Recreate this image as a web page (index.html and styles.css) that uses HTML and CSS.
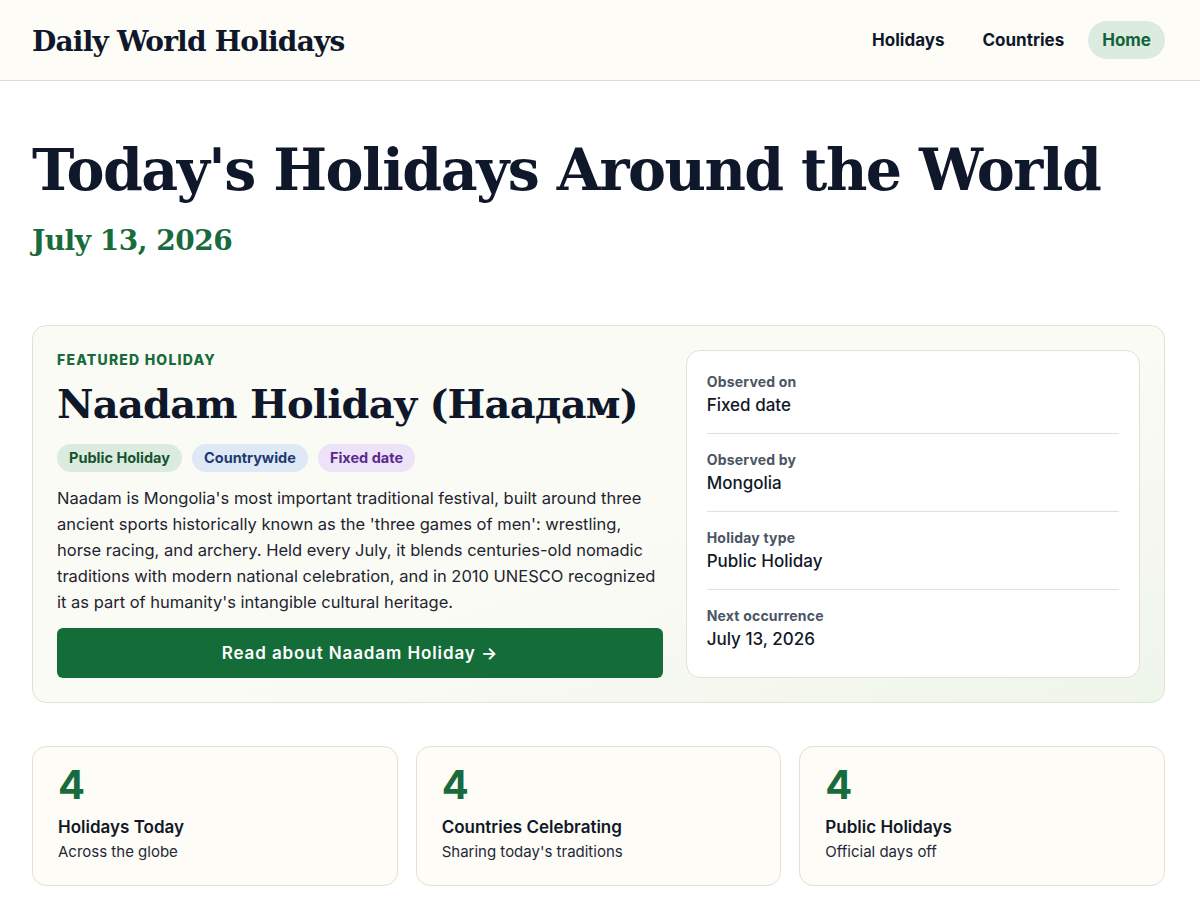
FILE: index.html
```html
<!DOCTYPE html>
<html lang="en">
<head>
    <meta charset="UTF-8">
    <title>Daily World Holidays</title>
    <meta name="viewport" content="width=device-width, initial-scale=1.0">
    <link rel="stylesheet" href="styles.css">
</head>
<body>
    <header class="site-header">
        <a class="logo" href="#">Daily World Holidays</a>
        <nav class="nav">
            <a href="#">Holidays</a>
            <a href="#">Countries</a>
            <a href="#" class="active">Home</a>
        </nav>
    </header>

    <main class="page">
        <section class="intro">
            <h1>Today's Holidays Around the World</h1>
            <p class="today">July 13, 2026</p>
        </section>

        <section class="featured">
            <div class="featured-main">
                <p class="eyebrow">Featured Holiday</p>
                <h2>Naadam Holiday (Наадам)</h2>
                <div class="tags">
                    <span class="tag tag-green">Public Holiday</span>
                    <span class="tag tag-blue">Countrywide</span>
                    <span class="tag tag-purple">Fixed date</span>
                </div>
                <p class="summary">Naadam is Mongolia's most important traditional festival, built around three ancient sports historically known as the 'three games of men': wrestling, horse racing, and archery. Held every July, it blends centuries-old nomadic traditions with modern national celebration, and in 2010 UNESCO recognized it as part of humanity's intangible cultural heritage.</p>
                <a class="read-btn" href="#">Read about Naadam Holiday &rarr;</a>
            </div>
            <dl class="facts">
                <div class="fact">
                    <dt>Observed on</dt>
                    <dd>Fixed date</dd>
                </div>
                <div class="fact">
                    <dt>Observed by</dt>
                    <dd>Mongolia</dd>
                </div>
                <div class="fact">
                    <dt>Holiday type</dt>
                    <dd>Public Holiday</dd>
                </div>
                <div class="fact">
                    <dt>Next occurrence</dt>
                    <dd>July 13, 2026</dd>
                </div>
            </dl>
        </section>

        <section class="stats">
            <div class="stat">
                <div class="stat-num">4</div>
                <div class="stat-title">Holidays Today</div>
                <div class="stat-sub">Across the globe</div>
            </div>
            <div class="stat">
                <div class="stat-num">4</div>
                <div class="stat-title">Countries Celebrating</div>
                <div class="stat-sub">Sharing today's traditions</div>
            </div>
            <div class="stat">
                <div class="stat-num">4</div>
                <div class="stat-title">Public Holidays</div>
                <div class="stat-sub">Official days off</div>
            </div>
        </section>
    </main>
</body>
</html>
```

FILE: styles.css
```css
body {
    margin: 0;
    background: #ffffff;
    color: #0f172a;
    font-family: Inter, "Noto Sans", sans-serif;
}
a {
    text-decoration: none;
    color: inherit;
}

/* top bar */
.site-header {
    height: 80px;
    padding: 0 35px 0 32px;
    display: flex;
    align-items: center;
    justify-content: space-between;
    background: #fdfcf7;
    border-bottom: 1px solid #dedbd2;
}
.logo {
    font-family: "DejaVu Serif", Georgia, serif;
    font-weight: bold;
    font-size: 28px;
    letter-spacing: -0.8px;
    padding-top: 2px;
    color: #0f172a;
}
.nav {
    display: flex;
    align-items: center;
    gap: 10px;
}
.nav a {
    font-size: 17px;
    font-weight: 700;
    padding: 9px 14px;
    border-radius: 999px;
}
.nav a.active {
    background: #dcebdf;
    color: #14623a;
}

.page {
    padding: 0 35px 40px 32px;
}

/* heading */
.intro {
    padding-top: 58px;
    margin-bottom: 68px;
}
.intro h1 {
    margin: 0;
    font-family: "DejaVu Serif", Georgia, serif;
    font-weight: bold;
    font-size: 57px;
    letter-spacing: -1.5px;
    line-height: 1.1;
    color: #0f172a;
}
.today {
    margin: 22px 0 0;
    font-family: "DejaVu Serif", Georgia, serif;
    font-weight: bold;
    font-size: 28px;
    letter-spacing: -0.5px;
    color: #186b3c;
}

/* featured card */
.featured {
    display: grid;
    grid-template-columns: 4fr 3fr;
    gap: 23px;
    padding: 24px;
    border: 1px solid #e4e0d2;
    border-radius: 14px;
    background: linear-gradient(160deg, #fbfbf5 55%, #eef5ea 100%);
    margin-bottom: 43px;
}
.featured-main {
    display: flex;
    flex-direction: column;
}
.eyebrow {
    margin: 1px 0 0;
    font-size: 14px;
    font-weight: 800;
    letter-spacing: 1.2px;
    text-transform: uppercase;
    color: #186b3c;
}
.featured h2 {
    margin: 12px 0 0;
    font-family: "DejaVu Serif", Georgia, serif;
    font-weight: bold;
    font-size: 40px;
    letter-spacing: -0.8px;
    line-height: 1.2;
    color: #0f172a;
}
.tags {
    display: flex;
    gap: 10px;
    margin-top: 16px;
}
.tag {
    font-size: 14.5px;
    font-weight: 700;
    padding: 5px 12px 6px;
    border-radius: 999px;
}
.tag-green { background: #dcebdf; color: #14532d; }
.tag-blue { background: #dfe9f6; color: #1e3a6e; }
.tag-purple { background: #ece3f8; color: #5b2a8c; }
.summary {
    margin: 13px 0 13px;
    font-size: 16.5px;
    line-height: 26px;
    color: #1e2430;
}
.read-btn {
    margin-top: auto;
    height: 50px;
    display: flex;
    align-items: center;
    justify-content: center;
    background: #146c38;
    color: #ffffff;
    font-size: 17px;
    font-weight: 600;
    letter-spacing: 0.9px;
    border-radius: 6px;
}

/* facts box */
.facts {
    margin: 0;
    padding: 5px 20px;
    background: #ffffff;
    border: 1px solid #e4e0d2;
    border-radius: 14px;
}
.fact {
    padding: 17px 0 18px;
    border-bottom: 1px solid #e4e0d2;
}
.fact:last-child {
    border-bottom: none;
}
.fact dt {
    font-size: 14px;
    font-weight: 700;
    letter-spacing: 0.2px;
    color: #4b5565;
}
.fact dd {
    margin: 5px 0 0;
    font-size: 17px;
    font-weight: 500;
    color: #111827;
}

/* stat cards */
.stats {
    display: grid;
    grid-template-columns: repeat(3, 1fr);
    gap: 18px;
}
.stat {
    padding: 16px 25px 24px;
    background: #fdfcf7;
    border: 1px solid #e4e0d2;
    border-radius: 14px;
}
.stat-num {
    font-size: 40px;
    font-weight: 700;
    line-height: 1.1;
    color: #186b3c;
}
.stat-title {
    margin-top: 10px;
    font-size: 17px;
    font-weight: 600;
    color: #111827;
}
.stat-sub {
    margin-top: 5px;
    font-size: 15px;
    color: #1f2937;
}
```
